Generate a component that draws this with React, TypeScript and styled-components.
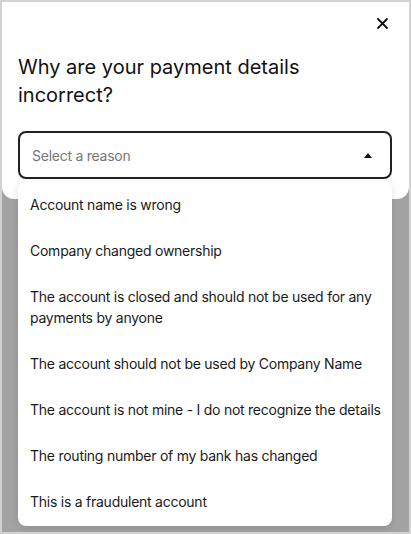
import React from "react";
import styled, { createGlobalStyle } from "styled-components";

const Global = createGlobalStyle`
  html, body { margin: 0; padding: 0; background: #fff; }
  body { font-family: Inter, "Noto Sans", sans-serif; }
  * { box-sizing: border-box; }
`;

const Frame = styled.div`
  width: 411px;
  height: 534px;
  border: 2px solid #d2d2d2;
  background: #a3a3a3;
  position: relative;
  overflow: hidden;
  display: flex;
  flex-direction: column;
`;

const Card = styled.div`
  background: #fff;
  border-radius: 0 0 12px 12px;
  height: 197px;
  padding: 0 17px 0 16px;
  display: flex;
  flex-direction: column;
`;

const TopBar = styled.div`
  height: 40px;
  display: flex;
  justify-content: flex-end;
  align-items: center;
  padding: 2px 3px 0 0;
`;

const CloseButton = styled.button`
  border: none;
  background: none;
  padding: 0;
  width: 14px;
  height: 14px;
  display: flex;
  align-items: center;
  justify-content: center;
  cursor: pointer;
`;

const Title = styled.h1`
  margin: 11px 0 0;
  font-size: 20px;
  line-height: 28px;
  font-weight: 400;
  color: #111;
  letter-spacing: 0;
`;

const SelectBox = styled.div`
  margin-top: 22px;
  height: 48px;
  border: 2px solid #222;
  border-radius: 8px;
  display: flex;
  align-items: center;
  justify-content: space-between;
  padding: 0 18px 0 12px;
  font-size: 14px;
  letter-spacing: -0.25px;
  color: #777;
`;

const Menu = styled.ul`
  position: absolute;
  left: 16px;
  right: 17px;
  top: 179px;
  margin: 0;
  padding: 0 0 2px;
  list-style: none;
  background: #fff;
  border-radius: 8px;
  box-shadow: 0 2px 8px rgba(0, 0, 0, 0.12);
  z-index: 2;
`;

const Item = styled.li`
  padding: 12.5px 8px 12.5px 12px;
  font-size: 14px;
  line-height: 21px;
  letter-spacing: -0.25px;
  color: #1a1a1a;
`;

const reasons = [
  "Account name is wrong",
  "Company changed ownership",
  "The account is closed and should not be used for any payments by anyone",
  "The account should not be used by Company Name",
  "The account is not mine - I do not recognize the details",
  "The routing number of my bank has changed",
  "This is a fraudulent account",
];

export default function App() {
  return (
    <>
      <Global />
      <Frame>
        <Card>
          <TopBar>
            <CloseButton aria-label="Close">
              <svg width="11" height="11" viewBox="0 0 11 11">
                <path d="M1 1L10 10M10 1L1 10" stroke="#111" strokeWidth="1.8" strokeLinecap="round" />
              </svg>
            </CloseButton>
          </TopBar>
          <Title>Why are your payment details incorrect?</Title>
          <SelectBox>
            <span>Select a reason</span>
            <svg width="8" height="5" viewBox="0 0 8 5">
              <path d="M0 5L4 0L8 5Z" fill="#111" />
            </svg>
          </SelectBox>
        </Card>
        <Menu>
          {reasons.map((r) => (
            <Item key={r}>{r}</Item>
          ))}
        </Menu>
      </Frame>
    </>
  );
}
